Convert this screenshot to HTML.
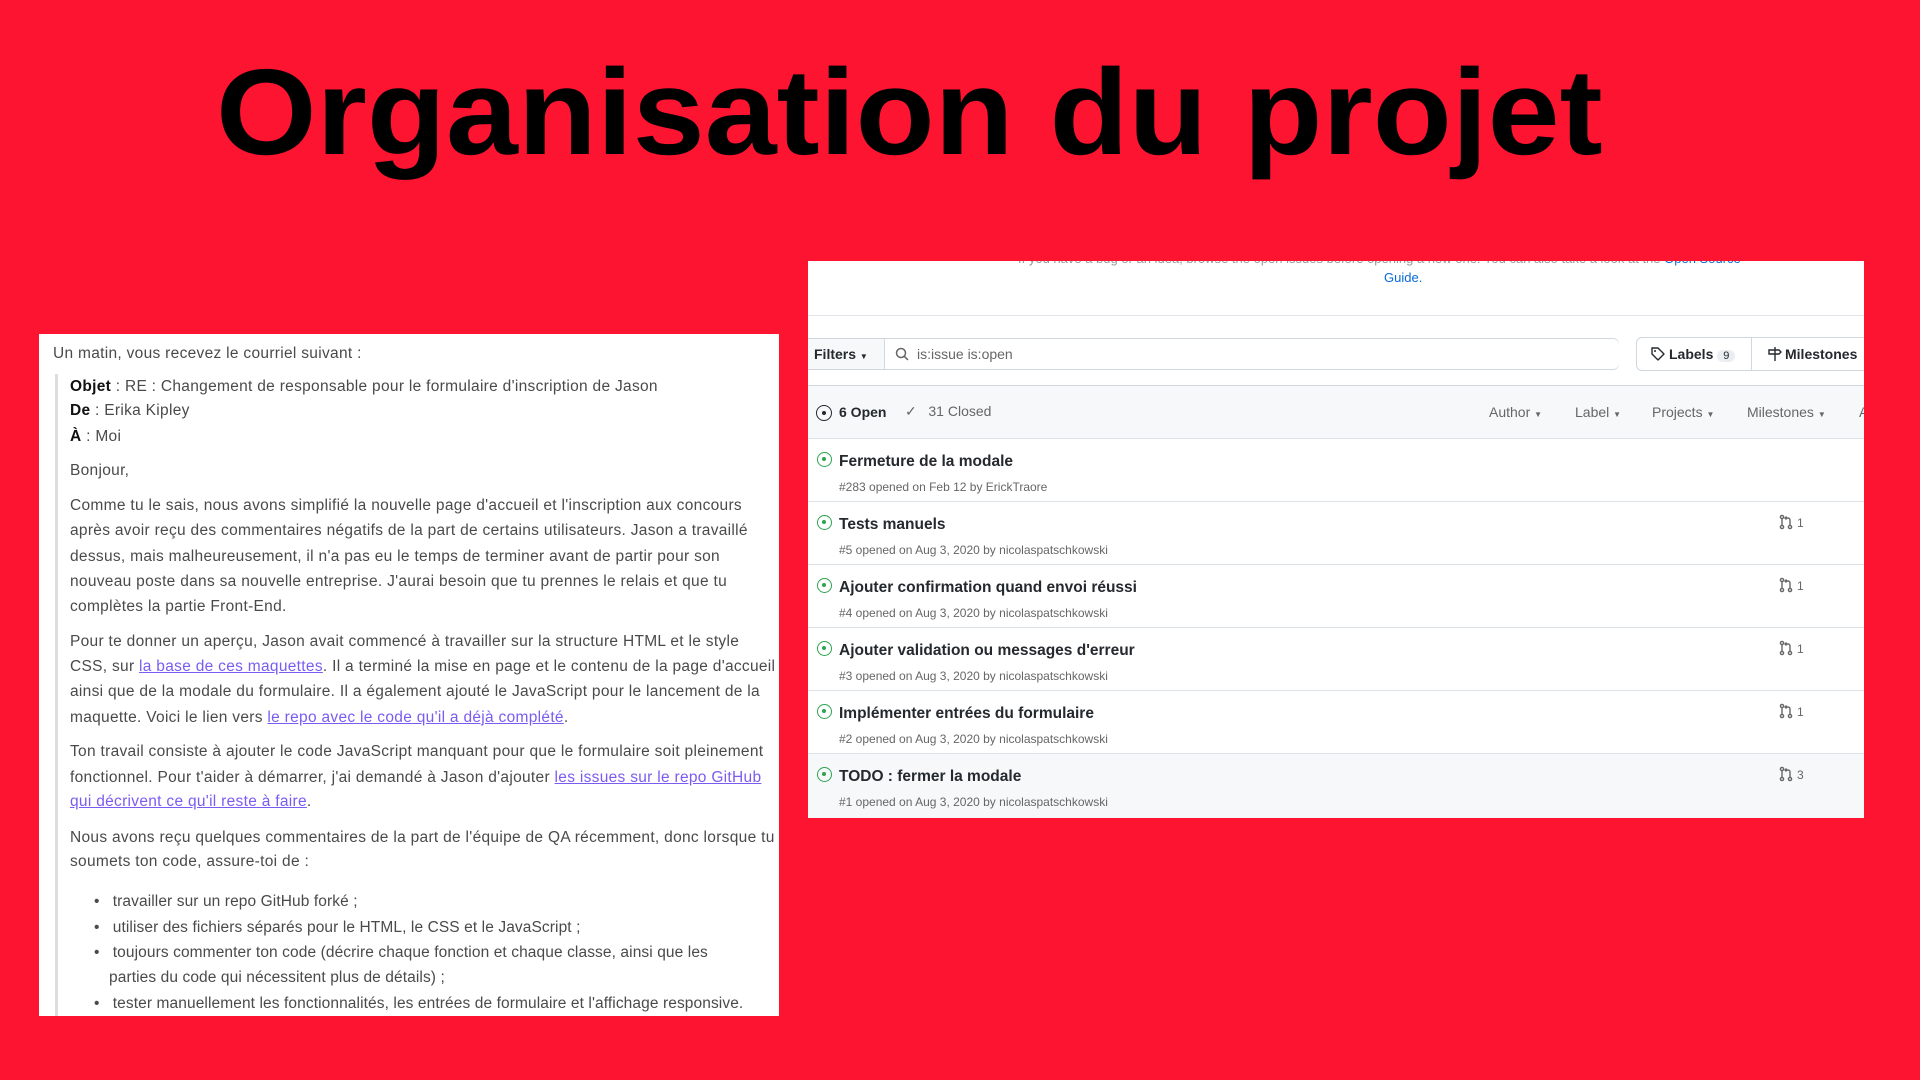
<!DOCTYPE html>
<html><head><meta charset="utf-8"><style>
*{margin:0;padding:0;box-sizing:border-box}
body{width:1920px;height:1080px;background:#fc1430;position:relative;overflow:hidden;font-family:"Liberation Sans",sans-serif}
.title{position:absolute;left:216px;top:42px;font-size:122px;font-weight:bold;color:#000;white-space:nowrap;transform-origin:0 0;transform:scaleX(1.06)}
.lp{position:absolute;left:39px;top:334px;width:740px;height:682px;background:#fff;overflow:hidden}
.l{position:absolute;height:25px;line-height:25px;font-size:15.5px;color:#4a4a4a;white-space:nowrap;letter-spacing:0.3px}
.l b{color:#111}
.l a{color:#7b5cf0;text-decoration:underline}
.bq{position:absolute;left:16px;top:40px;width:3px;height:660px;background:#ddd}
.rp{position:absolute;left:808px;top:261px;width:1056px;height:557px;background:#fff;overflow:hidden}
.t{position:absolute;white-space:nowrap}
.row{position:absolute;left:0;width:1056px;height:63px;border-top:1px solid #dde2e7}
.it{position:absolute;left:31px;font-size:15.5px;font-weight:bold;color:#24292e}
.im{position:absolute;left:31px;font-size:12px;color:#666}
.oi{position:absolute;left:9px;width:15px;height:15px;border:1.6px solid #2da44e;border-radius:50%}
.oi:after{content:"";position:absolute;left:4px;top:4px;width:4px;height:4px;background:#2da44e;border-radius:50%}
.pr{position:absolute;left:970px;font-size:12px;color:#666}
.pr svg{vertical-align:-3px;margin-right:3px}
</style></head><body>
<div class="title">Organisation du projet</div>

<div class="lp">
<div class="bq"></div>
<div class="l" style="left:14px;top:7px">Un matin, vous recevez le courriel suivant :</div>
<div class="l" style="left:31px;top:40px"><b>Objet</b> : RE : Changement de responsable pour le formulaire d'inscription de Jason</div>
<div class="l" style="left:31px;top:64px"><b>De</b> : Erika Kipley</div>
<div class="l" style="left:31px;top:90px"><b>À</b> : Moi</div>
<div class="l" style="left:31px;top:124px">Bonjour,</div>
<div class="l" style="left:31px;top:159px">Comme tu le sais, nous avons simplifié la nouvelle page d'accueil et l'inscription aux concours</div>
<div class="l" style="left:31px;top:184px">après avoir reçu des commentaires négatifs de la part de certains utilisateurs. Jason a travaillé</div>
<div class="l" style="left:31px;top:210px">dessus, mais malheureusement, il n'a pas eu le temps de terminer avant de partir pour son</div>
<div class="l" style="left:31px;top:235px">nouveau poste dans sa nouvelle entreprise. J'aurai besoin que tu prennes le relais et que tu</div>
<div class="l" style="left:31px;top:260px">complètes la partie Front-End.</div>
<div class="l" style="left:31px;top:295px">Pour te donner un aperçu, Jason avait commencé  à travailler sur la structure HTML et le style</div>
<div class="l" style="left:31px;top:320px">CSS, sur <a>la base de ces maquettes</a>. Il a terminé la mise en page et le contenu de la page d'accueil</div>
<div class="l" style="left:31px;top:345px">ainsi que de la modale du formulaire. Il a également ajouté le JavaScript pour le lancement de la</div>
<div class="l" style="left:31px;top:371px">maquette. Voici le lien vers <a>le repo avec le code qu'il a déjà complété</a>.</div>
<div class="l" style="left:31px;top:405px">Ton travail consiste à ajouter le code JavaScript manquant pour que le formulaire soit pleinement</div>
<div class="l" style="left:31px;top:431px">fonctionnel. Pour t'aider à démarrer, j'ai demandé à Jason d'ajouter <a>les issues sur le repo GitHub</a></div>
<div class="l" style="left:31px;top:455px"><a>qui décrivent ce qu'il reste à faire</a>.</div>
<div class="l" style="left:31px;top:491px">Nous avons reçu quelques commentaires de la part de l'équipe de QA récemment, donc lorsque tu</div>
<div class="l" style="left:31px;top:515px">soumets ton code, assure-toi de :</div>
<div class="l" style="left:55px;top:555px;letter-spacing:0.1px">•&nbsp;&nbsp;&nbsp;travailler sur un repo GitHub forké ;</div>
<div class="l" style="left:55px;top:581px;letter-spacing:0.1px">•&nbsp;&nbsp;&nbsp;utiliser des fichiers séparés pour le HTML, le CSS et le JavaScript ;</div>
<div class="l" style="left:55px;top:606px;letter-spacing:0.1px">•&nbsp;&nbsp;&nbsp;toujours commenter ton code (décrire chaque fonction et chaque classe, ainsi que les</div>
<div class="l" style="left:70px;top:631px;letter-spacing:0.1px">parties du code qui nécessitent plus de détails) ;</div>
<div class="l" style="left:55px;top:657px;letter-spacing:0.1px">•&nbsp;&nbsp;&nbsp;tester manuellement les fonctionnalités, les entrées de formulaire et l'affichage responsive.</div>
</div>

<div class="rp">
<div class="t" style="left:210px;top:-10px;font-size:13px;color:#999">If you have a bug or an idea, browse the open issues before opening a new one. You can also take a look at the <span style="color:#0969da">Open Source</span></div>
<div class="t" style="left:576px;top:9px;font-size:13px;color:#0969da">Guide.</div>
<div style="position:absolute;left:0;top:54px;width:1056px;height:1px;background:#e1e4e8"></div>
<div style="position:absolute;left:-6px;top:77px;width:817px;height:32px;border:1px solid #d0d7de;border-radius:6px;background:#f6f8fa"></div>
<div style="position:absolute;left:76px;top:78px;width:735px;height:30px;background:#fff;border-left:1px solid #d0d7de;border-radius:0 6px 6px 0"></div>
<div class="t" style="left:6px;top:85px;font-size:14px;font-weight:bold;color:#24292e">Filters <span style="font-size:8px">▼</span></div>
<svg style="position:absolute;left:86px;top:85px" width="16" height="16" viewBox="0 0 16 16"><circle cx="7" cy="7" r="4.5" fill="none" stroke="#666" stroke-width="1.5"/><path d="M10.3 10.3L14 14" stroke="#666" stroke-width="1.5"/></svg>
<div class="t" style="left:109px;top:85px;font-size:14px;color:#666">is:issue is:open</div>
<div style="position:absolute;left:828px;top:76px;width:240px;height:34px;border:1px solid #d0d7de;border-radius:6px"></div>
<div style="position:absolute;left:943px;top:77px;width:1px;height:32px;background:#d0d7de"></div>
<svg style="position:absolute;left:842px;top:85px" width="16" height="16" viewBox="0 0 16 16"><path d="M2 2h6l6 6-6 6-6-6z" fill="none" stroke="#24292e" stroke-width="1.4" stroke-linejoin="round"/><circle cx="5" cy="5" r="1" fill="#24292e"/></svg>
<div class="t" style="left:861px;top:85px;font-size:14px;font-weight:bold;color:#24292e">Labels <span style="display:inline-block;background:#eaeef2;border-radius:9px;padding:0 6px;font-size:11px;font-weight:normal">9</span></div>
<svg style="position:absolute;left:959px;top:85px" width="16" height="16" viewBox="0 0 16 16"><path d="M8 1v14M2 4h10l2 2-2 2H2z" fill="none" stroke="#24292e" stroke-width="1.4"/></svg>
<div class="t" style="left:977px;top:85px;font-size:14px;font-weight:bold;color:#24292e">Milestones</div>
<div style="position:absolute;left:0;top:124px;width:1056px;height:53px;background:#f6f8fa;border-top:1px solid #d0d7de"></div>
<div style="position:absolute;left:8px;top:144px;width:16px;height:16px;border:1.6px solid #24292e;border-radius:50%"></div>
<div style="position:absolute;left:14px;top:150px;width:4px;height:4px;background:#24292e;border-radius:50%"></div>
<div class="t" style="left:31px;top:143px;font-size:14px;font-weight:bold;color:#24292e">6 Open</div>
<div class="t" style="left:97px;top:142px;font-size:14px;color:#666">✓&nbsp;&nbsp; 31 Closed</div>
<div class="t" style="left:681px;top:143px;font-size:14px;color:#666">Author <span style="font-size:8px">▼</span></div>
<div class="t" style="left:767px;top:143px;font-size:14px;color:#666">Label <span style="font-size:8px">▼</span></div>
<div class="t" style="left:844px;top:143px;font-size:14px;color:#666">Projects <span style="font-size:8px">▼</span></div>
<div class="t" style="left:939px;top:143px;font-size:14px;color:#666">Milestones <span style="font-size:8px">▼</span></div>
<div class="t" style="left:1051px;top:143px;font-size:14px;color:#666">A</div>

<svg width="0" height="0" style="position:absolute"><defs><symbol id="pr" viewBox="0 0 16 16"><circle cx="4" cy="3" r="1.6" fill="none" stroke="#666" stroke-width="1.4"/><circle cx="4" cy="13" r="1.6" fill="none" stroke="#666" stroke-width="1.4"/><circle cx="12" cy="13" r="1.6" fill="none" stroke="#666" stroke-width="1.4"/><path d="M4 4.6v6.8M12 11.4V6a2 2 0 0 0-2-2H7M8.5 2.5L7 4l1.5 1.5" fill="none" stroke="#666" stroke-width="1.4"/></symbol></defs></svg>

<div class="row" style="top:177px"><div class="oi" style="top:13px"></div><div class="it" style="top:14px">Fermeture de la modale</div><div class="im" style="top:41px">#283 opened on Feb 12 by ErickTraore</div></div>
<div class="row" style="top:240px"><div class="oi" style="top:13px"></div><div class="it" style="top:14px">Tests manuels</div><div class="im" style="top:41px">#5 opened on Aug 3, 2020 by nicolaspatschkowski</div><div class="pr" style="top:12px"><svg width="16" height="16"><use href="#pr"/></svg>1</div></div>
<div class="row" style="top:303px"><div class="oi" style="top:13px"></div><div class="it" style="top:14px">Ajouter confirmation quand envoi réussi</div><div class="im" style="top:41px">#4 opened on Aug 3, 2020 by nicolaspatschkowski</div><div class="pr" style="top:12px"><svg width="16" height="16"><use href="#pr"/></svg>1</div></div>
<div class="row" style="top:366px"><div class="oi" style="top:13px"></div><div class="it" style="top:14px">Ajouter validation ou messages d'erreur</div><div class="im" style="top:41px">#3 opened on Aug 3, 2020 by nicolaspatschkowski</div><div class="pr" style="top:12px"><svg width="16" height="16"><use href="#pr"/></svg>1</div></div>
<div class="row" style="top:429px"><div class="oi" style="top:13px"></div><div class="it" style="top:14px">Implémenter entrées du formulaire</div><div class="im" style="top:41px">#2 opened on Aug 3, 2020 by nicolaspatschkowski</div><div class="pr" style="top:12px"><svg width="16" height="16"><use href="#pr"/></svg>1</div></div>
<div class="row" style="top:492px;height:66px;background:#f6f8fa"><div class="oi" style="top:13px"></div><div class="it" style="top:14px">TODO : fermer la modale</div><div class="im" style="top:41px">#1 opened on Aug 3, 2020 by nicolaspatschkowski</div><div class="pr" style="top:12px"><svg width="16" height="16"><use href="#pr"/></svg>3</div></div>
</div>
</body></html>
